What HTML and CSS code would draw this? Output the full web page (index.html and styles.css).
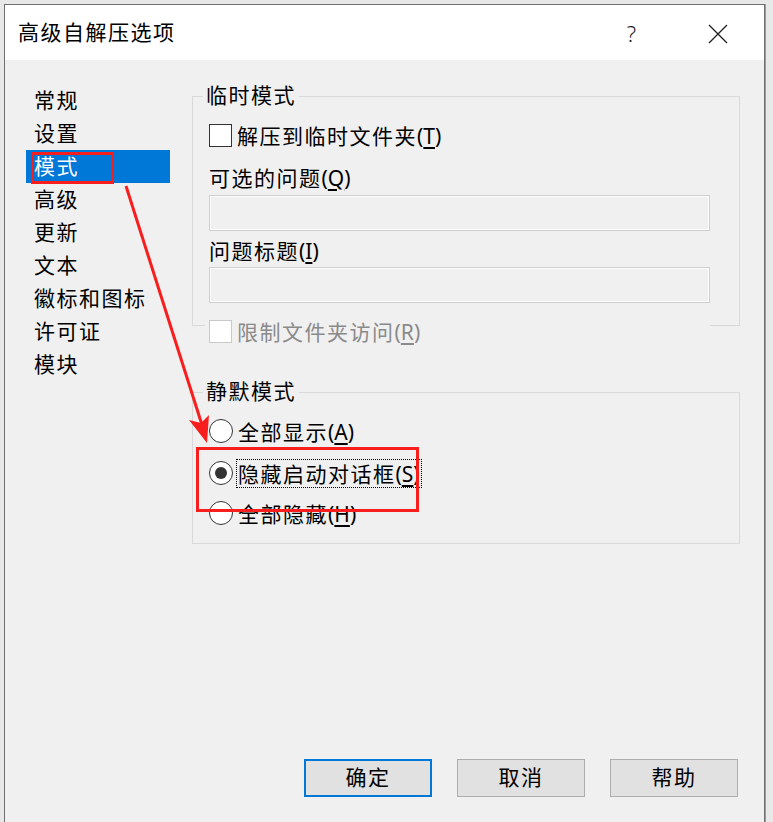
FILE: index.html
```html
<!DOCTYPE html>
<html lang="zh-CN">
<head>
    <meta charset="UTF-8">
    <title>高级自解压选项</title>
    <link rel="stylesheet" href="styles.css">
</head>
<body>
    <div class="dialog">
        <div class="titlebar">
            <span class="title">高级自解压选项</span>
            <span class="help">?</span>
            <svg class="close" width="20" height="20" viewBox="0 0 20 20">
                <path d="M1 1 L19 19 M19 1 L1 19" stroke="#1e1e1e" stroke-width="1.3" fill="none"/>
            </svg>
        </div>

        <div class="main">
            <ul class="sidebar">
                <li>常规</li>
                <li>设置</li>
                <li class="selected">模式</li>
                <li>高级</li>
                <li>更新</li>
                <li>文本</li>
                <li>徽标和图标</li>
                <li>许可证</li>
                <li>模块</li>
            </ul>

            <div class="content">
                <fieldset class="group group-temp">
                    <legend>临时模式</legend>
                    <div class="row first">
                        <span class="check"></span>
                        <span class="label">解压到临时文件夹<span class="key">(<u>T</u>)</span></span>
                    </div>
                    <div class="field-label first-label">可选的问题<span class="key">(<u>Q</u>)</span></div>
                    <div class="textbox"></div>
                    <div class="field-label">问题标题<span class="key">(<u>I</u>)</span></div>
                    <div class="textbox tight"></div>
                </fieldset>
                <div class="row disabled">
                    <span class="check"></span>
                    <span class="label">限制文件夹访问<span class="key">(<u>R</u>)</span></span>
                </div>

                <fieldset class="group group-silent">
                    <legend>静默模式</legend>
                    <div class="row first">
                        <span class="radio"></span>
                        <span class="label">全部显示<span class="key">(<u>A</u>)</span></span>
                    </div>
                    <div class="row second">
                        <span class="radio checked"></span>
                        <span class="label focused">隐藏启动对话框<span class="key">(<u>S</u>)</span></span>
                    </div>
                    <div class="row third">
                        <span class="radio"></span>
                        <span class="label">全部隐藏<span class="key">(<u>H</u>)</span></span>
                    </div>
                </fieldset>
            </div>
        </div>

        <div class="buttons">
            <button class="default">确定</button>
            <button>取消</button>
            <button>帮助</button>
        </div>
    </div>

    <svg class="marks" width="773" height="822" viewBox="0 0 773 822">
        <rect x="32.5" y="153.5" width="80" height="29" fill="none" stroke="#f81e1e" stroke-width="3"/>
        <rect x="197.5" y="448.5" width="220" height="62" fill="none" stroke="#f81e1e" stroke-width="3"/>
        <line x1="126" y1="186" x2="203" y2="428" stroke="#f81e1e" stroke-width="3"/>
        <polygon points="207,443 189,420 201,423 209,415" fill="#f81e1e"/>
    </svg>
</body>
</html>
```

FILE: styles.css
```css
body {
    margin: 0;
    width: 773px;
    height: 822px;
    overflow: hidden;
    background-color: #e8e8e8;
    font-family: "Noto Sans CJK SC", "Noto Sans", sans-serif;
    font-size: 21px;
    color: #000;
    position: relative;
}
.dialog {
    margin: 4px 0 0 4px;
    width: 759px;
    height: 830px;
    border: 1px solid #6f6f6f;
    box-shadow: 1px 0 0 #9a9a9a;
    background-color: #f0f0f0;
}
.titlebar {
    height: 55px;
    background: white;
    display: flex;
    align-items: center;
    padding-left: 13px;
}
.title {
    flex: 1;
    letter-spacing: 1.5px;
    padding-bottom: 4px;
}
.help {
    font-family: "Noto Sans", sans-serif;
    font-weight: 300;
    font-size: 22px;
    color: #1e1e1e;
    margin-right: 72px;
}
.close {
    margin-right: 36px;
    margin-top: 2px;
}
.main {
    display: flex;
    align-items: flex-start;
}
.sidebar {
    list-style: none;
    margin: 24px 0 0 21px;
    padding: 0;
    width: 144px;
}
.sidebar li {
    height: 33px;
    line-height: 31px;
    padding-left: 8px;
    padding-bottom: 2px;
    box-sizing: border-box;
    letter-spacing: 1.5px;
}
.sidebar li.selected {
    background-color: #0078d7;
    color: white;
}
.content {
    margin-left: 22px;
    width: 548px;
}
.group {
    border: 1px solid #d9d9d9;
    margin: 0;
    padding: 0 0 22px 10px;
    min-width: 0;
}
.group legend {
    padding: 0 3px 4px;
    line-height: 26px;
    letter-spacing: 1.5px;
}
.group-temp {
    margin-top: 21px;
}
.group-silent {
    margin-top: 33px;
    padding-bottom: 17px;
}
.row {
    display: flex;
    align-items: center;
    height: 26px;
    margin-left: 6px;
    margin-top: 15px;
}
.row.first {
    margin-top: 11px;
}
.row.second {
    margin-top: 16px;
}
.row.third {
    margin-top: 14px;
}
.label {
    margin-left: 5px;
    line-height: 26px;
    letter-spacing: 1.5px;
}
.key {
    font-family: "Noto Sans", sans-serif;
    letter-spacing: 0;
}
.key u {
    text-underline-offset: 3px;
}
.check {
    width: 21px;
    height: 21px;
    border: 1.5px solid #333;
    background: white;
}
.radio {
    width: 22px;
    height: 22px;
    border: 1.5px solid #333;
    border-radius: 50%;
    background: white;
    display: flex;
    align-items: center;
    justify-content: center;
}
.radio.checked::after {
    content: "";
    width: 12px;
    height: 12px;
    border-radius: 50%;
    background: #333;
}
.focused {
    margin-left: 3px;
    padding: 0 1px;
    line-height: 26px;
    border: 1px dotted #000;
}
.field-label {
    margin-left: 6px;
    margin-top: 6px;
    line-height: 26px;
    letter-spacing: 1.5px;
}
.field-label.first-label {
    margin-top: 16px;
}
.textbox {
    margin: 4px 0 0 6px;
    width: 499px;
    height: 34px;
    border: 1px solid #cfcfcf;
    box-shadow: inset 0 0 0 1px #fcfcfc;
    background-color: #f0f0f0;
}
.textbox.tight {
    margin-top: 3px;
}
.row.disabled {
    position: relative;
    margin: -8px 0 0 13px;
    width: 501px;
    padding-left: 4px;
    background-color: #f0f0f0;
    color: #8a8a8a;
}
.row.disabled .check {
    border-color: #c9c9c9;
}
.buttons {
    display: flex;
    justify-content: flex-end;
    gap: 25px;
    margin-top: 215px;
    padding-right: 26px;
}
button {
    width: 128px;
    height: 38px;
    font-family: "Noto Sans CJK SC", sans-serif;
    font-size: 21px;
    letter-spacing: 1.5px;
    background-color: #e1e1e1;
    border: 1px solid #adadad;
    padding: 0 0 5px;
    color: #000;
}
button.default {
    border: 2px solid #0078d7;
}
.marks {
    position: absolute;
    left: 0;
    top: 0;
    pointer-events: none;
}
```
